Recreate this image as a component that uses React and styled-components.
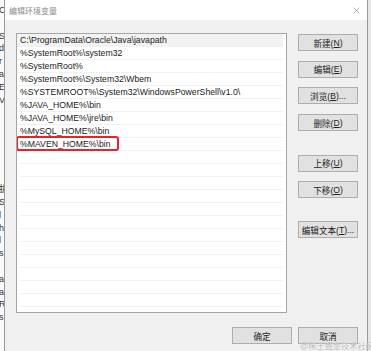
import styled, { createGlobalStyle } from "styled-components"

const GlobalStyle = createGlobalStyle`
  html, body {
    margin: 0;
    padding: 0;
    background: #ffffff;
  }
  body {
    font-family: "Liberation Sans", "Noto Sans CJK SC", Arial, sans-serif;
  }
`

const Screen = styled.div`
  display: flex;
  width: 371px;
  height: 351px;
  overflow: hidden;
  background: #ffffff;
  position: relative;
`

const Backdrop = styled.div`
  width: 4px;
  flex: none;
  overflow: hidden;
  padding-top: 4px;
  font-size: 9px;
  line-height: 12.8px;
  color: #333;
  white-space: nowrap;
  box-sizing: border-box;
  background: #fafafa;
  div {
    margin-left: -1px;
  }
`

const RightBackdrop = styled.div`
  flex: 1;
  background: #e6e6e6;
`

const Window = styled.div`
  width: 364px;
  flex: none;
  display: flex;
  flex-direction: column;
  background: #f0f0f0;
  border-left: 1px solid #9a9a9a;
  border-right: 1px solid #9a9a9a;
  box-sizing: border-box;
`

const TitleBar = styled.div`
  height: 20px;
  display: flex;
  align-items: center;
  justify-content: space-between;
  padding: 0 7px 0 4px;
  background: #ffffff;
  font-size: 8px;
  color: #8a8a8a;
`

const CloseIcon = styled.svg`
  width: 7px;
  height: 7px;
  margin-top: 1px;
`

const Body = styled.div`
  display: grid;
  grid-template-columns: 271px 60px;
  column-gap: 11px;
  padding: 13px 9px 0 11px;
`

const ListBox = styled.div`
  height: 280px;
  border: 1px solid #a6a6a6;
  background: #ffffff;
  box-sizing: border-box;
  overflow: hidden;
`

const Row = styled.div`
  position: relative;
  height: 13px;
  line-height: 13px;
  padding-left: 3px;
  margin: 0 3px 0 0;
  font-size: 8.7px;
  color: #1a1a1a;
  white-space: nowrap;
  box-sizing: border-box;
  border-bottom: 1px solid #f1f1f1;
  background: ${p => (p.$selected ? "#f2f2f2" : "transparent")};
`

const EmptyRow = styled(Row)`
  margin-left: 3px;
`

const Highlight = styled.span`
  position: absolute;
  left: -1px;
  top: -2px;
  width: 103px;
  height: 15px;
  border: 2px solid #e8212b;
  border-radius: 3px;
  box-sizing: border-box;
`

const SideButtons = styled.div`
  display: flex;
  flex-direction: column;
  gap: 9.7px;
  padding-top: 1px;
`

const Button = styled.div`
  width: 60px;
  height: 17px;
  flex: none;
  display: flex;
  align-items: center;
  justify-content: center;
  background: #e1e1e1;
  border: 1px solid #adadad;
  box-sizing: border-box;
  font-size: 8.6px;
  color: #222;
  margin-top: ${p => p.$gapTop || 0}px;
  u {
    text-decoration: underline;
  }
`

const Footer = styled.div`
  display: flex;
  justify-content: flex-end;
  gap: 6px;
  padding: 14px 9px 0 0;
`

const Watermark = styled.div`
  position: absolute;
  left: 300px;
  top: 339px;
  font-size: 8.2px;
  color: #b9b9b9;
  white-space: nowrap;
  text-shadow: 0 0 1px #ffffff;
`

const paths = [
  "C:\\ProgramData\\Oracle\\Java\\javapath",
  "%SystemRoot%\\system32",
  "%SystemRoot%",
  "%SystemRoot%\\System32\\Wbem",
  "%SYSTEMROOT%\\System32\\WindowsPowerShell\\v1.0\\",
  "%JAVA_HOME%\\bin",
  "%JAVA_HOME%\\jre\\bin",
  "%MySQL_HOME%\\bin",
  "%MAVEN_HOME%\\bin",
]

const behind = ["C", "", "S", "d", "r", "a", "E", "V", "", "", "", "", "", "", "拔", "S", "l", "h", "l", "s", "", "a", "a", "R", "s"]

export default function App() {
  const empties = Array.from({ length: 13 })
  return (
    <>
      <GlobalStyle />
      <Screen>
        <Backdrop>
          {behind.map((c, i) => <div key={i}>{c || "\u00a0"}</div>)}
        </Backdrop>
        <Window>
          <TitleBar>
            <span>编辑环境变量</span>
            <CloseIcon viewBox="0 0 10 10">
              <path d="M1 1 L9 9 M9 1 L1 9" stroke="#8c8c8c" strokeWidth="1" fill="none" />
            </CloseIcon>
          </TitleBar>
          <Body>
            <ListBox>
              {paths.map((p, i) => (
                <Row key={p} $selected={i === 0}>
                  {p}
                  {p.startsWith("%MAVEN") && <Highlight />}
                </Row>
              ))}
              {empties.map((_, i) => <EmptyRow key={i} />)}
            </ListBox>
            <SideButtons>
              <Button>新建(<u>N</u>)</Button>
              <Button>编辑(<u>E</u>)</Button>
              <Button>浏览(<u>B</u>)...</Button>
              <Button>删除(<u>D</u>)</Button>
              <Button $gapTop={14}>上移(<u>U</u>)</Button>
              <Button>下移(<u>O</u>)</Button>
              <Button $gapTop={13}>编辑文本(<u>T</u>)...</Button>
            </SideButtons>
          </Body>
          <Footer>
            <Button>确定</Button>
            <Button>取消</Button>
          </Footer>
        </Window>
        <RightBackdrop />
        <Watermark>@稀土掘金技术社区</Watermark>
      </Screen>
    </>
  )
}
